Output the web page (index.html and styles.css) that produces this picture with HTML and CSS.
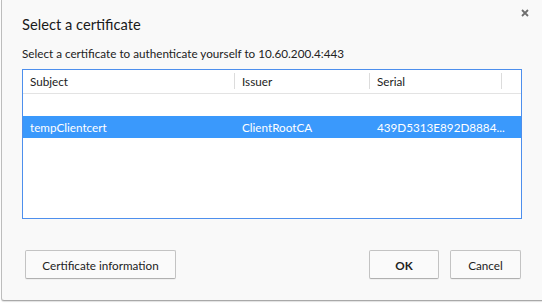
FILE: index.html
```html
<!DOCTYPE html>
<html>
<head>
<meta charset="utf-8">
<link rel="stylesheet" href="styles.css">
</head>
<body>
<div class="dialog">
  <div class="head">
    <div class="title">Select a certificate</div>
    <svg class="close" width="8" height="8" viewBox="0 0 8 8"><path d="M1 1L7 7M7 1L1 7" stroke="#6e6e6e" stroke-width="1.8"/></svg>
  </div>
  <div class="sub">Select a certificate to authenticate yourself to 10.60.200.4:443</div>
  <div class="table">
    <div class="row header">
      <div class="th">Subject</div>
      <div class="th">Issuer</div>
      <div class="th">Serial</div>
      <div class="th last"></div>
    </div>
    <div class="row empty"></div>
    <div class="row selected">
      <div class="td">tempClientcert</div>
      <div class="td">ClientRootCA</div>
      <div class="td">439D5313E892D8884...</div>
      <div class="td"></div>
    </div>
  </div>
  <div class="buttons">
    <button class="btn info">Certificate information</button>
    <div class="right">
      <button class="btn ok">OK</button>
      <button class="btn cancel">Cancel</button>
    </div>
  </div>
</div>
</body>
</html>
```
FILE: styles.css
```css
html, body {
  margin: 0;
  padding: 0;
  background: #ffffff;
}
body {
  width: 542px;
  height: 304px;
  overflow: hidden;
  font-family: "Lato", "Noto Sans", sans-serif;
  color: #222;
}
.dialog {
  margin-left: 1px;
  width: 541px;
  height: 301px;
  box-sizing: border-box;
  background: #f9f9f9;
  border-left: 1px solid #bdbdbd;
  border-bottom: 1px solid #a9a9a9;
  border-bottom-left-radius: 3px;
  box-shadow: 0 1px 1px rgba(0,0,0,0.12);
  padding: 0 21px 0 20px;
  display: flex;
  flex-direction: column;
}
.head {
  display: flex;
  justify-content: space-between;
  align-items: flex-start;
  height: 36px;
}
.title {
  font-size: 14.7px;
  line-height: 20px;
  margin-top: 14px;
  color: #1a1a1a;
}
.close {
  margin-top: 9px;
  margin-right: -8px;
}
.sub {
  font-size: 11.7px;
  line-height: 16px;
  height: 16px;
  margin-top: 9px;
  color: #222;
}
.table {
  margin-top: 8px;
  width: 500px;
  height: 150px;
  box-sizing: border-box;
  border: 1px solid #4d8fed;
  background: #fff;
  font-size: 11.7px;
}
.row {
  display: grid;
  grid-template-columns: 212px 135px 132px 1fr;
}
.header {
  height: 24px;
  border-bottom: 1px solid #e3e3e3;
  box-sizing: border-box;
}
.th {
  margin: 3px 0 4px;
  border-right: 1px solid #dcdcdc;
  padding-left: 7px;
  display: flex;
  align-items: center;
  color: #222;
}
.th.last { border-right: none; }
.empty { height: 22px; }
.selected {
  height: 22px;
  background: #3a99fc;
  color: #fff;
}
.td {
  padding-left: 7px;
  display: flex;
  align-items: center;
}
.buttons {
  margin-top: 31px;
  display: flex;
  justify-content: space-between;
  padding-left: 3px;
}
.right {
  display: flex;
  gap: 11px;
}
.btn {
  font-family: "Lato", "Noto Sans", sans-serif;
  font-size: 11.7px;
  height: 29px;
  background: #fafafa;
  border: 1px solid #c3c3c3;
  border-bottom-color: #b0b0b0;
  border-radius: 2px;
  color: #222;
  padding: 0;
  box-shadow: 0 1px 0 rgba(0,0,0,0.04);
}
.info { width: 151px; }
.ok { width: 70px; font-weight: bold; }
.cancel { width: 71px; }
```
